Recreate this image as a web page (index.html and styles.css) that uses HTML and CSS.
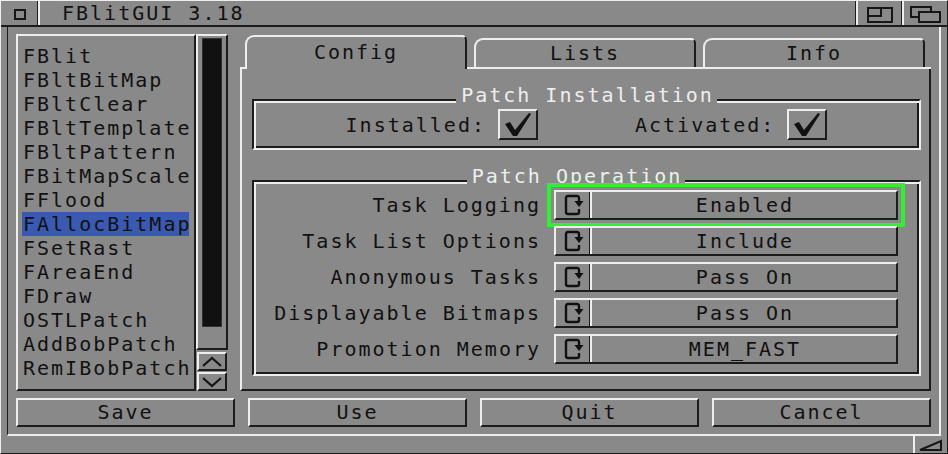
FILE: index.html
```html
<!DOCTYPE html>
<html>
<head>
<meta charset="utf-8">
<title>FBlitGUI 3.18</title>
<link rel="stylesheet" href="styles.css">
</head>
<body>
<div class="window">
  <div class="titlebar">
    <div class="gad close"><svg width="12" height="11" viewBox="0 0 12 11"><rect x="1" y="1" width="10" height="9" fill="none" stroke="#161616" stroke-width="2"/></svg></div>
    <div class="title">FBlitGUI 3.18</div>
    <div class="gad zoom"><svg width="26" height="16" viewBox="0 0 26 16"><rect x="1" y="1" width="24" height="14" fill="none" stroke="#161616" stroke-width="2"/><rect x="1" y="1" width="13" height="8" fill="none" stroke="#161616" stroke-width="2"/></svg></div>
    <div class="gad depth"><svg width="31" height="17" viewBox="0 0 31 17"><rect x="1" y="1" width="20" height="10" fill="none" stroke="#161616" stroke-width="2"/><rect x="9" y="6" width="21" height="10" fill="#898989" stroke="#161616" stroke-width="2"/></svg></div>
  </div>
  <div class="main">
    <div class="inner">
      <div class="top">
        <div class="listview">
          <div class="item">FBlit</div>
          <div class="item">FBltBitMap</div>
          <div class="item">FBltClear</div>
          <div class="item">FBltTemplate</div>
          <div class="item">FBltPattern</div>
          <div class="item">FBitMapScale</div>
          <div class="item">FFlood</div>
          <div class="item sel">FAllocBitMap</div>
          <div class="item">FSetRast</div>
          <div class="item">FAreaEnd</div>
          <div class="item">FDraw</div>
          <div class="item">OSTLPatch</div>
          <div class="item">AddBobPatch</div>
          <div class="item">RemIBobPatch</div>
        </div>
        <div class="scroller">
          <div class="prop"><div class="knob"></div></div>
          <div class="arrow up"><svg width="22" height="12" viewBox="0 0 22 12"><polyline points="2,10 11,2 20,10" fill="none" stroke="#161616" stroke-width="2.2"/></svg></div>
          <div class="arrow down"><svg width="22" height="12" viewBox="0 0 22 12"><polyline points="2,2 11,10 20,2" fill="none" stroke="#161616" stroke-width="2.2"/></svg></div>
        </div>
        <div class="tabs">
          <div class="tabrow">
            <div class="tab active">Config</div>
            <div class="tab">Lists</div>
            <div class="tab">Info</div>
          </div>
          <div class="page">
            <div class="group g1">
              <div class="gtitle">Patch Installation</div>
              <div class="checks">
                <span class="clabel">Installed:</span>
                <span class="checkbox"><svg width="30" height="25" viewBox="0 0 30 25"><path d="M2 12 L7 10 L12 18 L26 1 L28 2 L14 24 L10 24 Z" fill="#111"/></svg></span>
                <span class="clabel second">Activated:</span>
                <span class="checkbox"><svg width="30" height="25" viewBox="0 0 30 25"><path d="M2 12 L7 10 L12 18 L26 1 L28 2 L14 24 L10 24 Z" fill="#111"/></svg></span>
              </div>
            </div>
            <div class="group g2">
              <div class="gtitle">Patch Operation</div>
              <div class="ops">
                <div class="olabel">Task Logging</div>
                <div class="cycle focus"><span class="cicon"><svg width="22" height="24" viewBox="0 0 22 24"><path d="M16 8V5Q16 3 14 3H5Q3 3 3 5V19Q3 21 5 21H14Q16 21 16 19V16" fill="none" stroke="#111" stroke-width="2.4"/><path d="M11.5 8H20.5L16 14Z" fill="#111"/></svg></span><span class="cval">Enabled</span></div>
                <div class="olabel">Task List Options</div>
                <div class="cycle"><span class="cicon"><svg width="22" height="24" viewBox="0 0 22 24"><path d="M16 8V5Q16 3 14 3H5Q3 3 3 5V19Q3 21 5 21H14Q16 21 16 19V16" fill="none" stroke="#111" stroke-width="2.4"/><path d="M11.5 8H20.5L16 14Z" fill="#111"/></svg></span><span class="cval">Include</span></div>
                <div class="olabel">Anonymous Tasks</div>
                <div class="cycle"><span class="cicon"><svg width="22" height="24" viewBox="0 0 22 24"><path d="M16 8V5Q16 3 14 3H5Q3 3 3 5V19Q3 21 5 21H14Q16 21 16 19V16" fill="none" stroke="#111" stroke-width="2.4"/><path d="M11.5 8H20.5L16 14Z" fill="#111"/></svg></span><span class="cval">Pass On</span></div>
                <div class="olabel">Displayable Bitmaps</div>
                <div class="cycle"><span class="cicon"><svg width="22" height="24" viewBox="0 0 22 24"><path d="M16 8V5Q16 3 14 3H5Q3 3 3 5V19Q3 21 5 21H14Q16 21 16 19V16" fill="none" stroke="#111" stroke-width="2.4"/><path d="M11.5 8H20.5L16 14Z" fill="#111"/></svg></span><span class="cval">Pass On</span></div>
                <div class="olabel">Promotion Memory</div>
                <div class="cycle"><span class="cicon"><svg width="22" height="24" viewBox="0 0 22 24"><path d="M16 8V5Q16 3 14 3H5Q3 3 3 5V19Q3 21 5 21H14Q16 21 16 19V16" fill="none" stroke="#111" stroke-width="2.4"/><path d="M11.5 8H20.5L16 14Z" fill="#111"/></svg></span><span class="cval">MEM_FAST</span></div>
              </div>
            </div>
          </div>
        </div>
      </div>
      <div class="buttons">
        <div class="btn">Save</div>
        <div class="btn">Use</div>
        <div class="btn">Quit</div>
        <div class="btn">Cancel</div>
      </div>
    </div>
  </div>
  <div class="bottombar">
    <div class="sizer"><svg width="24" height="12" viewBox="0 0 24 12"><path d="M1 11 L22 2 V11 Z" fill="none" stroke="#161616" stroke-width="2"/></svg></div>
  </div>
</div>
</body>
</html>
```

FILE: styles.css
```css
* { box-sizing: border-box; }
html, body { margin: 0; padding: 0; background: #898989; }
body {
  font-family: "DejaVu Sans Mono", "Liberation Mono", monospace;
  font-size: 20px;
  letter-spacing: 2px;
  color: #111;
}
.window {
  width: 948px;
  height: 454px;
  display: flex;
  flex-direction: column;
  background: #898989;
  border-top: 1px solid #eeeeee;
  border-left: 1px solid #eeeeee;
  border-right: 1px solid #1c1c1c;
  border-bottom: 1px solid #1c1c1c;
}
.titlebar {
  height: 26px;
  flex: none;
  display: flex;
  border-bottom: 2px solid #1c1c1c;
}
.gad { display: flex; justify-content: center; align-items: center; padding-top: 3px; }
.close { width: 39px; border-right: 2px solid #eeeeee; box-shadow: inset -1px 0 0 #1c1c1c; }
.title { flex: 1; margin-left: 22px; line-height: 24px; }
.zoom { width: 46px; border-left: 2px solid #eeeeee; box-shadow: -1px 0 0 #1c1c1c; }
.depth { width: 45px; border-left: 2px solid #eeeeee; box-shadow: -1px 0 0 #1c1c1c; }

.main { flex: 1; display: flex; padding: 0 6px; }
.inner {
  flex: 1;
  display: flex;
  flex-direction: column;
  gap: 7px;
  border-left: 1px solid #1c1c1c;
  border-right: 2px solid #eeeeee;
  border-bottom: 2px solid #eeeeee;
  padding: 7px 8px 7px 8px;
}
.top { height: 357px; display: flex; }

.listview {
  width: 180px;
  border: 2px solid;
  border-color: #eeeeee #1c1c1c #1c1c1c #eeeeee;
  padding-top: 8px;
}
.item { height: 24px; line-height: 24px; margin: 0 5px 0 4px; padding-left: 1px; white-space: nowrap; }
.item.sel { background: #3a5ab2; }

.scroller { width: 32px; display: flex; flex-direction: column; margin-right: 12px; }
.prop {
  height: 316px;
  border: 2px solid;
  border-color: #eeeeee #1c1c1c #1c1c1c #eeeeee;
  padding: 2px 4px;
}
.knob { height: 289px; background: #111; border: 1px solid #333; }
.arrow {
  height: 19px;
  margin: 0 1px;
  border: 2px solid;
  border-color: #eeeeee #1c1c1c #1c1c1c #eeeeee;
  display: flex;
  justify-content: center;
  align-items: center;
}
.arrow.up { margin-top: 2px; }
.arrow.down { margin-top: 1px; }

.tabs { flex: 1; display: flex; flex-direction: column; }
.tabrow {
  height: 35px;
  display: flex;
  align-items: flex-end;
  gap: 7px;
  padding-left: 5px;
  border-bottom: 2px solid #eeeeee;
}
.tab {
  width: 222px;
  height: 29px;
  border-top: 2px solid #eeeeee;
  border-left: 2px solid #eeeeee;
  border-right: 2px solid #1c1c1c;
  border-radius: 9px 5px 0 0;
  text-align: center;
  line-height: 26px;
  background: #898989;
}
.tab.active { height: 34px; margin-bottom: -2px; line-height: 30px; }

.page {
  flex: 1;
  border-left: 2px solid #eeeeee;
  border-right: 2px solid #1c1c1c;
  border-bottom: 2px solid #1c1c1c;
  display: flex;
  flex-direction: column;
  padding: 0 8px 0 10px;
}
.group {
  margin-top: 30px;
  border: 2px solid;
  border-color: #1c1c1c #eeeeee #eeeeee #1c1c1c;
  box-shadow: inset 2px 2px 0 #eeeeee, inset -2px -2px 0 #1c1c1c;
  display: flex;
  flex-direction: column;
}
.gtitle {
  align-self: center;
  background: #898989;
  color: #eeeeee;
  line-height: 24px;
  padding: 0 3px 0 5px;
  margin: -26px 0 2px;
}
.g1 { height: 51px; padding: 8px 0; }
.checks { display: flex; justify-content: center; align-items: center; height: 31px; }
.clabel { margin-right: 12px; }
.clabel.second { margin-left: 97px; }
.checkbox {
  width: 40px;
  height: 31px;
  border: 2px solid;
  border-color: #eeeeee #1c1c1c #1c1c1c #eeeeee;
  display: flex;
  justify-content: center;
  align-items: center;
}
.g2 { height: 196px; padding: 8px 21px 10px 0; }
.ops {
  display: grid;
  grid-template-columns: 1fr 344px;
  column-gap: 13px;
  row-gap: 6px;
  grid-auto-rows: 30px;
}
.olabel { text-align: right; line-height: 30px; white-space: nowrap; }
.cycle {
  display: flex;
  border: 2px solid;
  border-color: #eeeeee #1c1c1c #1c1c1c #eeeeee;
}
.cycle.focus { outline: 4px solid #33ee33; outline-offset: 3px; }
.cicon {
  width: 34px;
  display: flex;
  align-items: center;
  justify-content: center;
  padding-left: 2px;
  border-right: 1px solid #1c1c1c;
  box-shadow: 2px 0 0 #eeeeee;
}
.cval { flex: 1; text-align: center; line-height: 26px; padding-left: 4px; }

.buttons { height: 29px; display: grid; grid-template-columns: repeat(4, 1fr); gap: 13px; }
.btn {
  border: 2px solid;
  border-color: #eeeeee #1c1c1c #1c1c1c #eeeeee;
  text-align: center;
  line-height: 25px;
}
.bottombar { height: 17px; flex: none; display: flex; justify-content: flex-end; }
.sizer {
  width: 34px;
  border-left: 2px solid #eeeeee;
  display: flex;
  align-items: center;
  justify-content: center;
}
```
